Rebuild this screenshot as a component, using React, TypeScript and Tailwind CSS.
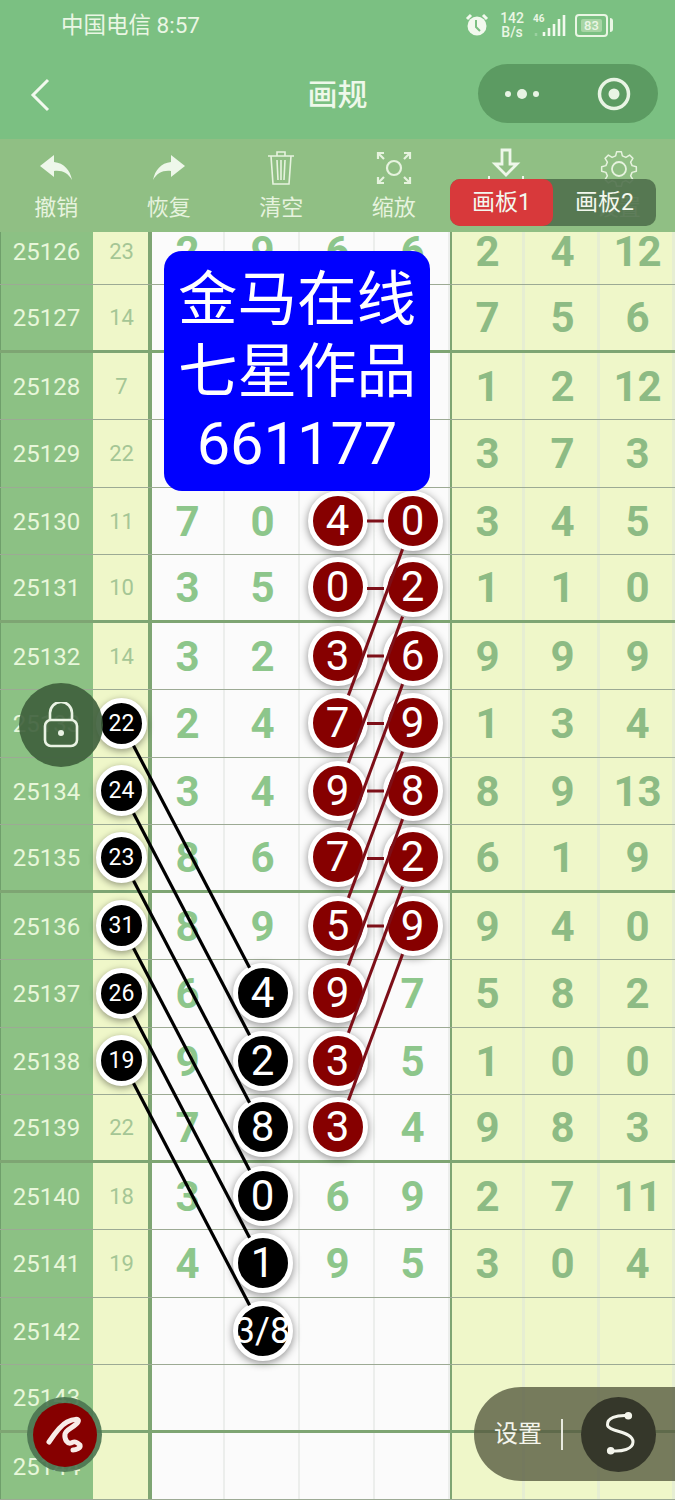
import type { ReactNode } from "react";

type Cell = string | number | { b: string | number } | { r: string | number } | null;

const B = (v: string | number) => ({ b: v });
const R = (v: string | number) => ({ r: v });

const rows: { id: number; side: Cell; mid: Cell[]; right: (number | null)[]; thick?: boolean }[] = [
  { id: 25126, side: 23, mid: [2, 9, 6, 6], right: [2, 4, 12] },
  { id: 25127, side: 14, mid: [null, null, null, null], right: [7, 5, 6], thick: true },
  { id: 25128, side: 7, mid: [null, null, null, null], right: [1, 2, 12] },
  { id: 25129, side: 22, mid: [null, null, null, null], right: [3, 7, 3] },
  { id: 25130, side: 11, mid: [7, 0, R(4), R(0)], right: [3, 4, 5] },
  { id: 25131, side: 10, mid: [3, 5, R(0), R(2)], right: [1, 1, 0], thick: true },
  { id: 25132, side: 14, mid: [3, 2, R(3), R(6)], right: [9, 9, 9] },
  { id: 25133, side: B(22), mid: [2, 4, R(7), R(9)], right: [1, 3, 4] },
  { id: 25134, side: B(24), mid: [3, 4, R(9), R(8)], right: [8, 9, 13] },
  { id: 25135, side: B(23), mid: [8, 6, R(7), R(2)], right: [6, 1, 9], thick: true },
  { id: 25136, side: B(31), mid: [8, 9, R(5), R(9)], right: [9, 4, 0] },
  { id: 25137, side: B(26), mid: [6, B(4), R(9), 7], right: [5, 8, 2] },
  { id: 25138, side: B(19), mid: [9, B(2), R(3), 5], right: [1, 0, 0] },
  { id: 25139, side: 22, mid: [7, B(8), R(3), 4], right: [9, 8, 3], thick: true },
  { id: 25140, side: 18, mid: [3, B(0), 6, 9], right: [2, 7, 11] },
  { id: 25141, side: 19, mid: [4, B(1), 9, 5], right: [3, 0, 4] },
  { id: 25142, side: null, mid: [null, B("3/8"), null, null], right: [null, null, null] },
  { id: 25143, side: null, mid: [null, null, null, null], right: [null, null, null], thick: true },
  { id: 25144, side: null, mid: [null, null, null, null], right: [null, null, null] },
];

const rowY = (i: number) => 251 + 67.5 * i;

function clipped(x1: number, y1: number, x2: number, y2: number, r1: number, r2: number) {
  const d = Math.hypot(x2 - x1, y2 - y1);
  const ux = (x2 - x1) / d;
  const uy = (y2 - y1) / d;
  return { x1: x1 + ux * r1, y1: y1 + uy * r1, x2: x2 - ux * r2, y2: y2 - uy * r2 };
}

const blackLines = [7, 8, 9, 10, 11, 12].map((i) =>
  clipped(122, rowY(i), 263, rowY(i + 4), 25, 29)
);
const redDiagonals = [4, 5, 6, 7, 8, 9, 10].map((i) =>
  clipped(413, rowY(i), 338, rowY(i + 3), 30, 30)
);
const redDashes = [4, 5, 6, 7, 8, 9, 10].map((i) => rowY(i));

function gearPath() {
  const cx = 19;
  const cy = 19;
  const teeth = 8;
  const pts: string[] = [];
  for (let i = 0; i < teeth; i++) {
    const a = (i / teeth) * Math.PI * 2;
    const step = (Math.PI * 2) / teeth;
    const pairs: [number, number][] = [
      [13.5, a - step * 0.32],
      [17.5, a - step * 0.17],
      [17.5, a + step * 0.17],
      [13.5, a + step * 0.32],
    ];
    pairs.forEach(([r, t]) => {
      pts.push(`${(cx + r * Math.sin(t)).toFixed(2)} ${(cy - r * Math.cos(t)).toFixed(2)}`);
    });
  }
  return `M${pts.join("L")}Z`;
}

function Big({ v, red }: { v: string | number; red?: boolean }) {
  const small = typeof v === "string";
  return (
    <div
      className={`relative z-10 flex h-[60px] w-[60px] shrink-0 items-center justify-center rounded-full border-[5px] border-white leading-none whitespace-nowrap text-white shadow-[0_2px_8px_rgba(0,0,0,0.45)] ${
        red ? "bg-[#860000]" : "bg-black"
      } ${small ? "text-[36px]" : "text-[42px]"}`}
    >
      {v}
    </div>
  );
}

function MidCell({ c }: { c: Cell }) {
  const base = "flex items-center justify-center shadow-[inset_-2px_0_0_#eceeec]";
  if (c !== null && typeof c === "object" && "b" in c)
    return (
      <div className={base}>
        <Big v={c.b} />
      </div>
    );
  if (c !== null && typeof c === "object" && "r" in c)
    return (
      <div className={base}>
        <Big v={c.r} red />
      </div>
    );
  return (
    <div className={`${base} pt-[2px] text-[42px] font-bold leading-none text-[#8dc68b]`}>
      {c as string | number | null}
    </div>
  );
}

function Row({ r }: { r: (typeof rows)[number] }) {
  return (
    <div
      className={`grid h-[67.5px] grid-cols-[93px_57px_300px_225px] ${
        r.thick ? "border-b-[3px] border-[#7ea573]" : "border-b border-[#9caa94]"
      }`}
    >
      <div className="flex items-center justify-center bg-[#8cc184] pt-[2px] text-[24px] leading-none text-[#e8f7da] shadow-[inset_1px_0_0_#6f9f6b]">
        {r.id}
      </div>
      <div className="flex items-center justify-center bg-[#eff7c9] text-[22px] leading-none text-[#a5c695] shadow-[inset_-2px_0_0_#7ea573]">
        {r.side !== null && typeof r.side === "object" && "b" in r.side ? (
          <div className="relative z-10 flex h-[51px] w-[51px] shrink-0 items-center justify-center rounded-full border-[5px] border-white bg-black text-[23px] leading-none text-white shadow-[0_2px_7px_rgba(0,0,0,0.4)]">
            {r.side.b}
          </div>
        ) : (
          <span className="pt-[2px]">{r.side as string | number | null}</span>
        )}
      </div>
      <div className="grid grid-cols-4 bg-[#fbfbfb] shadow-[inset_2px_0_0_#7ea573,inset_-1px_0_0_#7ea573]">
        {r.mid.map((c, i) => (
          <MidCell key={i} c={c} />
        ))}
      </div>
      <div className="grid grid-cols-3 bg-[#eff7c9] shadow-[inset_2px_0_0_#7ea573]">
        {r.right.map((v, i) => (
          <div
            key={i}
            className="flex items-center justify-center pt-[2px] text-[42px] font-bold leading-none text-[#8dbb84] shadow-[inset_-3px_0_0_#e6eed2]"
          >
            {v}
          </div>
        ))}
      </div>
    </div>
  );
}

function ToolItem({ label, children }: { label: string; children: ReactNode }) {
  return (
    <div className="flex flex-col items-center">
      <div className="flex h-[50px] items-end justify-center">{children}</div>
      <div className="mt-[4px] text-[22px] leading-[30px] text-[#e6f3de]">{label}</div>
    </div>
  );
}

function StatusBar() {
  return (
    <div className="flex h-[50px] items-center pl-[61px] pr-[62px] text-[#eaf6e4]">
      <span className="text-[22.5px] leading-none">中国电信 8:57</span>
      <div className="ml-auto flex items-center">
        <svg width="24" height="24" viewBox="0 0 24 24" className="mr-[11px]">
          <circle cx="12" cy="13" r="9.5" fill="#f2f9ee" />
          <path d="M2 6l4-4M22 6l-4-4" stroke="#f2f9ee" strokeWidth="3" />
          <path d="M11 7v7l4 4" stroke="#7bc082" strokeWidth="2" fill="none" />
        </svg>
        <div className="mr-[9px] flex flex-col items-center text-[14px] leading-[14px] font-medium">
          <span>142</span>
          <span>B/s</span>
        </div>
        <div className="relative mr-[8px] h-[24px] w-[34px]">
          <span className="absolute left-0 top-[1px] text-[10px] leading-none font-bold">46</span>
          <svg width="34" height="24" viewBox="0 0 34 24" className="absolute left-0 top-0">
            <path d="M3 20v3" stroke="#9bd0a0" strokeWidth="2.5" />
            <path d="M11 19v4M16 15v8M21 11v12M26 6v17M31 2v21" stroke="#f2f9ee" strokeWidth="2.6" />
          </svg>
        </div>
        <div className="flex h-[23px] w-[33px] items-center justify-center rounded-[4px] border-2 border-[#eaf6e4] text-[13px] leading-none font-medium">
          <span className="rounded-[2px] bg-[#a8d5a5] px-[3px] text-[#eaf6e4]">83</span>
        </div>
        <div className="ml-[2px] h-[14px] w-[3px] rounded-r bg-[#eaf6e4]" />
      </div>
    </div>
  );
}

function Header() {
  return (
    <div className="relative flex h-[89px] items-center justify-center">
      <svg width="24" height="36" viewBox="0 0 24 36" className="absolute left-[28px] top-[27px]">
        <path d="M20 3L5 18l15 15" fill="none" stroke="#f2f9ee" strokeWidth="3" />
      </svg>
      <span className="text-[30px] font-medium leading-none text-[#eef8ea]">画规</span>
      <div className="absolute left-[478px] top-[14px] flex h-[59px] w-[180px] items-center rounded-full bg-[#5c9b62]">
        <svg width="40" height="14" viewBox="0 0 40 14" className="ml-[24px]">
          <circle cx="6" cy="7" r="3" fill="#e8f4e4" />
          <circle cx="20" cy="7" r="5" fill="#e8f4e4" />
          <circle cx="34" cy="7" r="3" fill="#e8f4e4" />
        </svg>
        <svg width="34" height="34" viewBox="0 0 34 34" className="ml-[55px]">
          <circle cx="17" cy="17" r="14.5" fill="none" stroke="#e8f4e4" strokeWidth="3.5" />
          <circle cx="17" cy="17" r="5.5" fill="#e8f4e4" />
        </svg>
      </div>
    </div>
  );
}

function Toolbar() {
  return (
    <div className="relative z-30 grid h-[93px] grid-cols-6 bg-[#90bf84]">
      <ToolItem label="撤销">
        <svg width="32" height="25" viewBox="0 0 32 25" className="mb-[9px]">
          <path d="M0 11L14 0v7c10 1 16 8 18 18-4-7-10-10-18-9v6z" fill="#eef7ea" />
        </svg>
      </ToolItem>
      <ToolItem label="恢复">
        <svg width="32" height="25" viewBox="0 0 32 25" className="mb-[9px]">
          <path d="M32 11L18 0v7C8 8 2 15 0 25c4-7 10-10 18-9v6z" fill="#eef7ea" />
        </svg>
      </ToolItem>
      <ToolItem label="清空">
        <svg width="28" height="36" viewBox="0 0 28 36" fill="none" stroke="#e6f3de" strokeWidth="1.6" className="mb-[3px]">
          <path d="M1 6h26M10 6V2h8v4M4 6l2 28h16l2-28M10 10l1 20M14 10v20M18 10l-1 20" />
        </svg>
      </ToolItem>
      <ToolItem label="缩放">
        <svg width="36" height="34" viewBox="0 0 36 34" fill="none" stroke="#e6f3de" strokeWidth="2.2" className="mb-[4px]">
          <path d="M2 8V2h6M28 2h6v6M2 26v6h6M28 32h6v-6M3 3l5 5M33 3l-5 5M3 31l5-5M33 31l-5-5" />
          <circle cx="18" cy="17" r="7" />
        </svg>
      </ToolItem>
      <ToolItem label="保存">
        <svg width="40" height="32" viewBox="0 0 40 32" fill="none" stroke="#eef7ea" strokeWidth="2.8" className="mb-[9px]">
          <path d="M16 2h8v14h7L20 27 9 16h7z" />
          <path d="M3 28v3M37 28v3" strokeWidth="2" />
        </svg>
      </ToolItem>
      <ToolItem label="设置">
        <svg width="38" height="38" viewBox="0 0 38 38" fill="none" stroke="#e6f3de" strokeWidth="1.5" className="mb-[1px]">
          <path d={gearPath()} strokeLinejoin="round" />
          <circle cx="19" cy="19" r="7" strokeWidth="1.8" />
        </svg>
      </ToolItem>
      <div className="absolute left-[450px] top-[40px] flex h-[47px] w-[206px] rounded-[10px] bg-[#50704d]/90 text-[23px] leading-none text-[#f3f7ee]">
        <div className="flex w-[103px] items-center justify-center rounded-[10px] bg-[#d8393b]">画板1</div>
        <div className="flex w-[103px] items-center justify-center">画板2</div>
      </div>
    </div>
  );
}

export default function App() {
  return (
    <div className="relative h-[1500px] w-[675px] overflow-hidden bg-[#7bc082] font-['Roboto','Noto_Sans_CJK_SC',sans-serif]">
      <StatusBar />
      <Header />
      <Toolbar />
      <div className="-mt-[14.5px]">
        {rows.map((r) => (
          <Row key={r.id} r={r} />
        ))}
      </div>

      <svg width="675" height="1500" viewBox="0 0 675 1500" className="pointer-events-none absolute left-0 top-0 z-20">
        {blackLines.map((l, i) => (
          <line key={i} {...l} stroke="#000" strokeWidth="3.2" />
        ))}
        {redDiagonals.map((l, i) => (
          <line key={i} {...l} stroke="#7d0f18" strokeWidth="3" />
        ))}
        {redDashes.map((y, i) => (
          <line key={i} x1="367" y1={y} x2="384" y2={y} stroke="#7d0f18" strokeWidth="3" />
        ))}
      </svg>

      <div className="absolute left-[164px] top-[251px] z-20 flex h-[240px] w-[266px] flex-col items-center justify-center rounded-[18px] bg-[#0000ff] pt-[1px] text-[59.5px] leading-[72px] text-white">
        <div>金马在线</div>
        <div>七星作品</div>
        <div>661177</div>
      </div>

      <div className="absolute left-[19px] top-[683px] z-30 flex h-[84px] w-[84px] items-center justify-center rounded-full bg-[#3d5e3b]/90">
        <svg width="36" height="46" viewBox="0 0 36 46" fill="none" stroke="#eaf3e4" strokeWidth="2.6">
          <path d="M7 18v-7a11 11 0 0 1 22 0v7" />
          <rect x="2" y="18" width="32" height="26" rx="6" />
          <circle cx="18" cy="31" r="3" fill="#eaf3e4" stroke="none" />
        </svg>
      </div>

      <div className="absolute left-[27px] top-[1397px] z-30 flex h-[75px] w-[75px] items-center justify-center rounded-full bg-[#4a7350]/90">
        <div className="flex h-[64px] w-[64px] items-center justify-center rounded-full bg-[#860000]">
          <svg width="64" height="64" viewBox="0 0 64 64" fill="none" stroke="#f8ece8" strokeWidth="5" strokeLinecap="round" strokeLinejoin="round">
            <path d="M16 39C22 30 28 22 34 19 40 16 47 15 45 19 42 24 33 26 32 31 31 37 35 41 38 40 41 38 43 38 47 42 48 45 43 47 40 47" />
          </svg>
        </div>
      </div>

      <div className="absolute left-[474px] top-[1387px] z-30 flex h-[94px] w-[201px] items-center rounded-l-[47px] bg-[#575b41]/80">
        <span className="ml-[20px] text-[24px] leading-none text-[#f4f5ec]">设置</span>
        <div className="ml-[19px] h-[31px] w-[2px] bg-[#e8eadf]" />
        <div className="ml-[18px] flex h-[75px] w-[75px] items-center justify-center rounded-full bg-[#35372a]">
          <svg width="34" height="50" viewBox="0 0 34 50" fill="none" stroke="#f4f5ec" strokeWidth="3" strokeLinecap="round">
            <path d="M26.3 6.7C14 6 5 9 5.5 16 6 23 31 22 31 33 31 40 20 43 8.7 41.7" />
            <circle cx="26.3" cy="6.7" r="3.8" fill="#f4f5ec" stroke="none" />
            <circle cx="8.7" cy="41.7" r="3.8" fill="#f4f5ec" stroke="none" />
          </svg>
        </div>
      </div>
    </div>
  );
}
